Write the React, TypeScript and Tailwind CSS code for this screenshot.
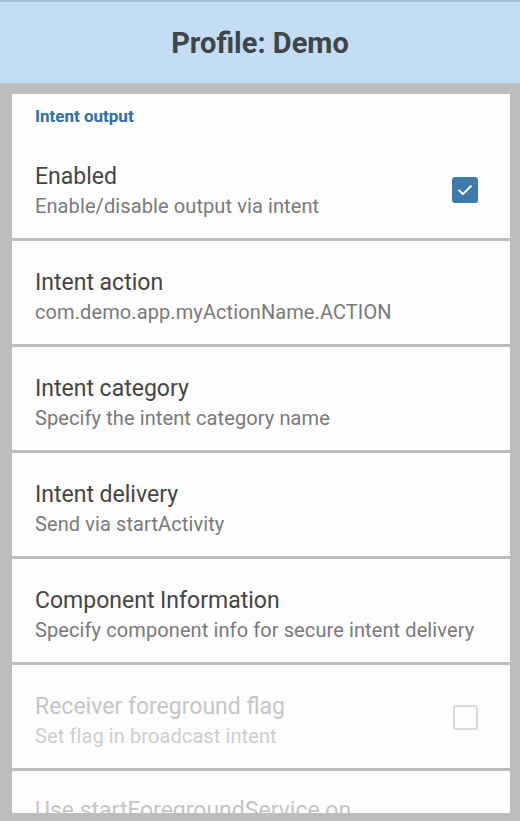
import * as React from "react";

type Pref = {
  title: string;
  summary: string;
  checkbox?: "on" | "off";
  disabled?: boolean;
};

const prefs: Pref[] = [
  { title: "Intent action", summary: "com.demo.app.myActionName.ACTION" },
  { title: "Intent category", summary: "Specify the intent category name" },
  { title: "Intent delivery", summary: "Send via startActivity" },
  {
    title: "Component Information",
    summary: "Specify component info for secure intent delivery",
  },
  {
    title: "Receiver foreground flag",
    summary: "Set flag in broadcast intent",
    checkbox: "off",
    disabled: true,
  },
];

function Checkbox({ checked, disabled }: { checked: boolean; disabled?: boolean }) {
  if (checked) {
    return (
      <div className="flex h-[26px] w-[26px] items-center justify-center rounded-[3px] bg-[#3e7bad]">
        <svg viewBox="0 0 24 24" className="h-5 w-5" fill="none" stroke="white" strokeWidth="2.4" strokeLinecap="round" strokeLinejoin="round">
          <path d="M5 12.5l4.5 4.5L19 7.5" />
        </svg>
      </div>
    );
  }
  return (
    <div
      className={
        disabled
          ? "h-[25px] w-[25px] rounded-[3px] border-2 border-[#d9d9d9]"
          : "h-[25px] w-[25px] rounded-[3px] border-2 border-[#757575]"
      }
    />
  );
}

function Texts({ title, summary, disabled }: Pref) {
  return (
    <div className="flex-1">
      <div className={disabled ? "text-[23px] leading-[30px] text-[#c6c6c6]" : "text-[23px] leading-[30px] text-[#454545]"}>
        {title}
      </div>
      <div className={disabled ? "text-[20px] leading-[28px] tracking-[0.1px] text-[#cdcdcd]" : "text-[20px] leading-[28px] tracking-[0.1px] text-[#7a7a7a]"}>
        {summary}
      </div>
    </div>
  );
}

function PrefRow(p: Pref) {
  return (
    <div className="flex h-[103px] shrink-0 items-start bg-[#fdfdfd] pl-[23px] pr-[32px] pt-[27px]">
      <Texts {...p} />
      {p.checkbox && (
        <div className="pt-[13px]">
          <Checkbox checked={p.checkbox === "on"} disabled={p.disabled} />
        </div>
      )}
    </div>
  );
}

export default function App() {
  return (
    <div className="h-[821px] overflow-hidden bg-[#bdbdbd] font-['Roboto',sans-serif]">
      {/* app bar */}
      <div className="flex h-[83px] items-center justify-center border-t-2 border-[#9fbfdc] bg-[#c3ddf4] pt-[3px]">
        <h1 className="text-[29px] font-bold text-[#3f4549]">Profile: Demo</h1>
      </div>

      {/* preference list, clipped like a scroll view */}
      <div className="ml-[12px] mr-[10px] mt-[11px] flex h-[719px] flex-col gap-[3px] overflow-hidden">
        <div className="h-[144px] shrink-0 bg-[#fdfdfd]">
          <div className="pl-[23px] pt-[12px] text-[17px] font-bold leading-[20px] text-[#2f6fa8]">Intent output</div>
          <div className="flex items-start pl-[23px] pr-[32px] pt-[36px]">
            <Texts title="Enabled" summary="Enable/disable output via intent" />
            <div className="pt-[15px]">
              <Checkbox checked />
            </div>
          </div>
        </div>
        {prefs.map((p) => (
          <PrefRow key={p.title} {...p} />
        ))}
        <div className="h-[103px] shrink-0 bg-[#fdfdfd] pl-[23px] pt-[25px]">
          <div className="text-[23px] leading-[30px] text-[#c6c6c6]">Use startForegroundService on</div>
        </div>
      </div>
    </div>
  );
}
